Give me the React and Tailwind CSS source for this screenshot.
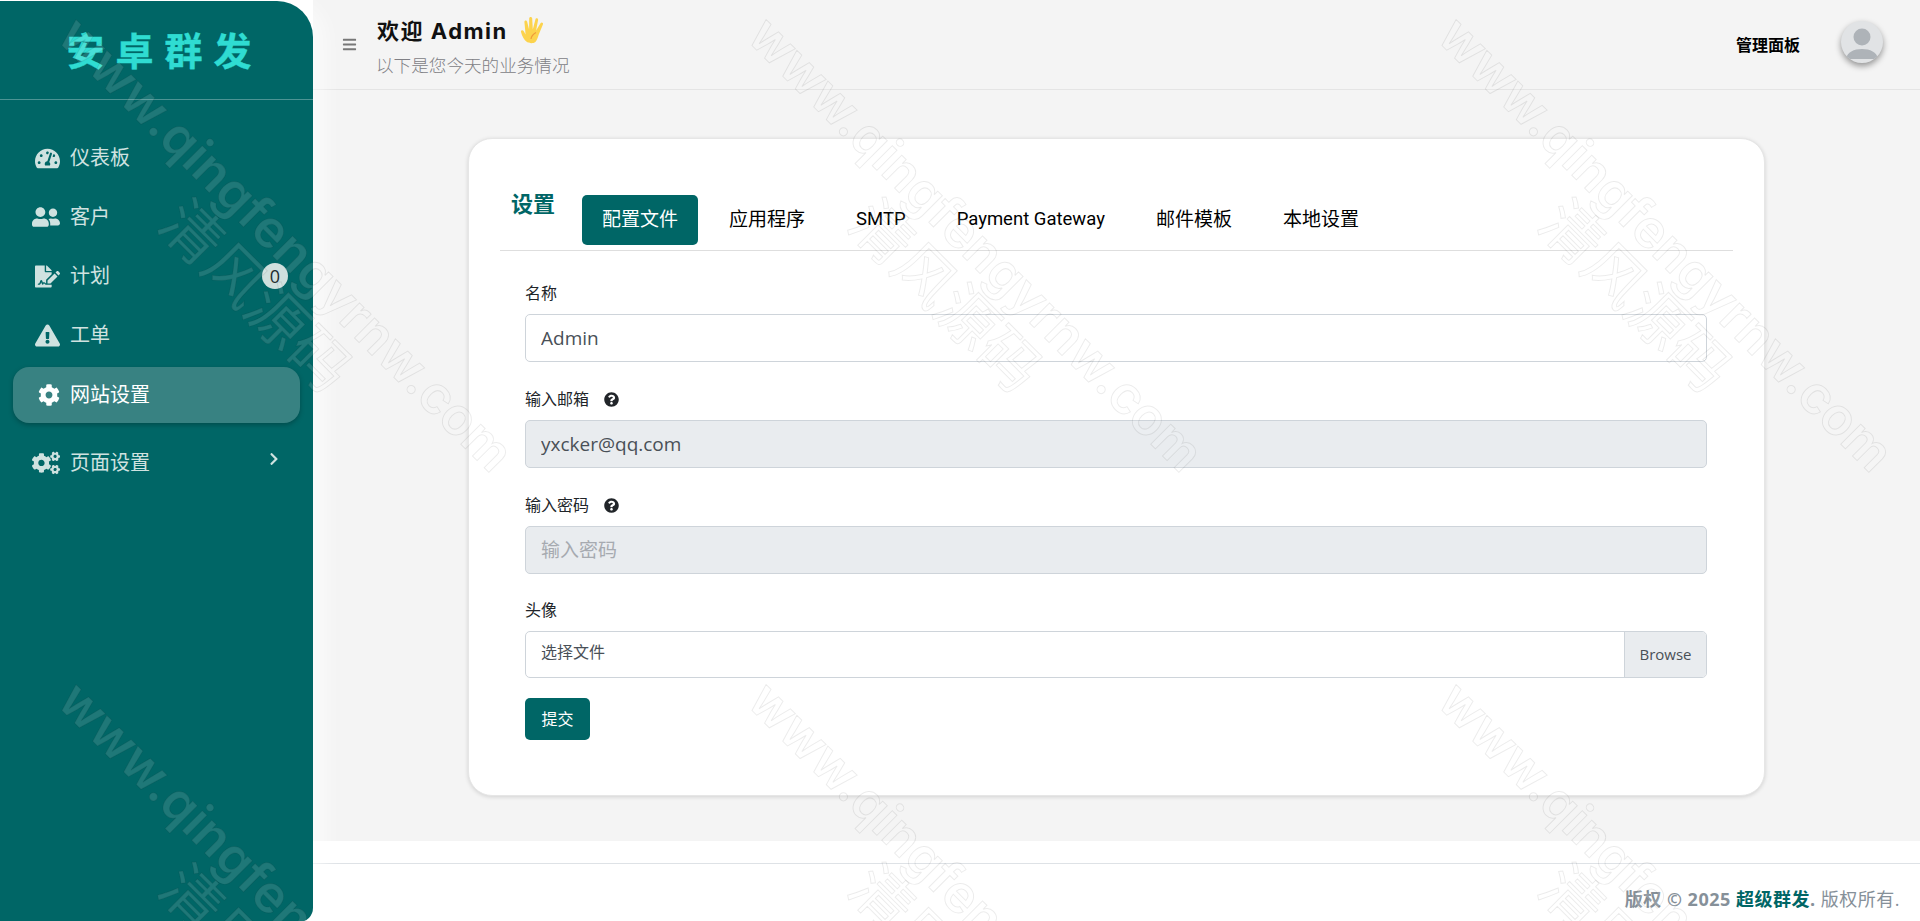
import { FaTachometerAlt, FaUserFriends, FaFileSignature, FaExclamationTriangle, FaCog, FaCogs, FaChevronRight, FaQuestionCircle, FaBars } from 'react-icons/fa'

const CJK = 'font-["Open_Sans","Noto_Sans_CJK_SC",sans-serif]'

const navItems = [
  { label: '仪表板', icon: FaTachometerAlt, size: 25, cls: 'mt-0' },
  { label: '客户', icon: FaUserFriends, size: 28, cls: 'mt-[3px]' },
  { label: '计划', icon: FaFileSignature, size: 25, cls: 'mt-[3px]', badge: '0' },
  { label: '工单', icon: FaExclamationTriangle, size: 25, cls: 'mt-[3px]' },
  { label: '网站设置', icon: FaCog, size: 22, cls: 'mt-[4px]', active: true },
  { label: '页面设置', icon: FaCogs, size: 28, cls: 'mt-[12px]', arrow: true },
]

const tabs = ['配置文件', '应用程序', 'SMTP', 'Payment Gateway', '邮件模板', '本地设置']

function Sidebar() {
  return (
    <aside className="w-[313px] shrink-0 h-full mt-px bg-[#006666] rounded-tr-[36px] rounded-br-[14px] shadow-[12px_0_20px_rgba(255,255,255,0.6)] z-10">
      <div className="h-[98px] border-b border-white/30 box-content flex items-center justify-center">
        <span className="text-[38px] font-bold tracking-[11px] pl-[16px] text-[#2fdcd2] leading-none [-webkit-text-stroke:0.4px_#2fdcd2]">安卓群发</span>
      </div>
      <nav className="pt-[30px] px-[13px] flex flex-col">
        {navItems.map((it) => {
          const Icon = it.icon
          return (
            <a key={it.label} className={`${it.cls} h-[56px] flex items-center pl-[19px] pr-[12px] rounded-[16px] text-[20px] ${it.active ? 'bg-[#388282] text-white shadow-[0_2px_5px_rgba(0,0,0,0.25)]' : 'text-[#cfe2e0]'}`}>
              <span className="w-[28px] flex justify-end"><Icon size={it.size} /></span>
              <span className="ml-[10px] flex-1">{it.label}</span>
              {it.badge && <span className="w-[26px] h-[26px] rounded-full bg-[#cfe0de] text-[#1f2d2d] text-[18px] flex items-center justify-center">{it.badge}</span>}
              {it.arrow && <FaChevronRight className="text-[14px] mr-[7px] -mt-[8px]" />}
            </a>
          )
        })}
      </nav>
    </aside>
  )
}

function Header() {
  return (
    <header className="h-[89px] shrink-0 border-t border-b border-[#e4e4e4] bg-[#f4f4f4] box-content -mt-px flex items-center pl-[29px] pr-[37px]">
      <FaBars className="text-[15px] text-[#777]" />
      <div className="ml-[19px] pt-[2px]">
        <div className="flex items-center h-[28px]">
          <h1 className="pl-[1px] text-[22px] font-bold text-[#111] leading-none tracking-[1.5px] font-['Inter','Noto_Sans_CJK_SC',sans-serif]">欢迎 Admin</h1>
          <svg className="ml-[12px] -mt-[2px]" width="26" height="28" viewBox="0 0 26 28">
            <path d="M7 26c-3-2-5-6-6-10-.4-1.600 1.600-2.400 2.600-1l2 3.600L4.400 6c-.2-1.800 2.200-2.200 2.700-.4l2 8L9.200 2.400c0-2 2.800-2 3 0l.6 11L15.400 3.400c.5-1.800 3-1.200 2.700.6l-2 10.600 4.400-7.400c1-1.600 3.200-.4 2.400 1.300L18.600 19c-.8 2.600-1.600 5-3.200 7-2 1.600-6 1.600-8.400 0z" fill="#fcd34d" />
            <path d="M11 23c.4-3 2.200-5 5-6.500" stroke="#ef9b3a" strokeWidth="1.200" fill="none" />
          </svg>
        </div>
        <p className="text-[17.6px] leading-[20px] mt-[10px] font-light text-[#808085]">以下是您今天的业务情况</p>
      </div>
      <div className="ml-auto flex items-center">
        <span className="text-[16px] font-bold text-black">管理面板</span>
        <div className="ml-[41px] -mt-[6px] w-[42px] h-[42px] rounded-full bg-[#e1e3e5] overflow-hidden shadow-[0_3px_6px_rgba(0,0,0,0.4)]">
          <svg viewBox="0 0 42 42" width="42" height="42">
            <circle cx="21" cy="16" r="8.500" fill="#aeb3b8" />
            <path d="M5 38c1-7 8-10 16-10s15 3 16 10z" fill="#aeb3b8" />
          </svg>
        </div>
      </div>
    </header>
  )
}

function Label({ text, help }) {
  return (
    <div className="h-[24px] mb-[9px] flex items-center text-[16px] text-[#212529]">
      {text}
      {help && <FaQuestionCircle className="ml-[15px] text-[15px]" />}
    </div>
  )
}

function Field({ label, help, value, disabled, placeholder }) {
  return (
    <div className="mb-[25px]">
      <Label text={label} help={help} />
      <input
        readOnly
        disabled={disabled}
        value={value || ''}
        placeholder={placeholder}
        className={`block w-full h-[48px] px-[15px] border border-[#ced4da] rounded-[5px] text-[19px] text-[#495057] placeholder:text-[#a6aab0] outline-none ${disabled ? 'bg-[#e9ecef]' : 'bg-white'}`}
      />
    </div>
  )
}

function SettingsCard() {
  return (
    <section className="bg-white rounded-[24px] border border-[#e6e6e6] shadow-[0_1px_4px_rgba(0,0,0,0.14)] pt-[56px] pb-[55px] px-[31px]">
      <div className="flex items-start border-b border-[#dedede] pb-[5px] pl-[11px]">
        <h2 className="text-[22px] font-bold text-[#006666] leading-[16px] mr-[27px]">设置</h2>
        <div className="flex gap-[11px] font-['Roboto','Noto_Sans_CJK_SC',sans-serif]">
          {tabs.map((t, i) => (
            <button key={t} className={`h-[50px] px-[20px] rounded-[5px] ${t === 'SMTP' || t === 'Payment Gateway' ? 'text-[18.5px]' : 'text-[19px]'} ${i === 0 ? 'bg-[#006666] text-white' : 'text-black'}`}>{t}</button>
          ))}
        </div>
      </div>
      <form className="pt-[30px] pl-[25px] pr-[26px]">
        <Field label="名称" value="Admin" />
        <Field label="输入邮箱" help value="yxcker@qq.com" disabled />
        <Field label="输入密码" help placeholder="输入密码" disabled />
        <div className="-mt-[1px] mb-[20px]">
          <Label text="头像" />
          <div className="flex h-[47px] border border-[#ced4da] rounded-[5px] overflow-hidden text-[#495057]">
            <span className="flex-1 flex items-center pl-[15px] text-[16px] pb-[5px]">选择文件</span>
            <span className="w-[82px] flex items-center justify-center bg-[#e9ecef] border-l border-[#ced4da] text-[15px]">Browse</span>
          </div>
        </div>
        <button type="button" className="block w-[65px] h-[42px] rounded-[5px] bg-[#006666] text-white text-[16px]">提交</button>
      </form>
    </section>
  )
}

function Footer() {
  return (
    <footer className="h-[80px] shrink-0 bg-white pt-[22px]">
      <div className="border-t border-[#dee2e6] h-full flex items-center justify-end pr-[20px] pt-[14px] text-[18px] tracking-[0.5px] text-[#869099]">
        <b>版权 © 2025&nbsp;</b><b className="text-[#006666]">超级群发</b><b>.</b>&nbsp;版权所有.
      </div>
    </footer>
  )
}

function Watermark() {
  const tiles = Array.from({ length: 9 })
  return (
    <div className="absolute inset-0 overflow-hidden pointer-events-none z-20 grid grid-cols-[repeat(3,690px)] auto-rows-[665px]">
      {tiles.map((_, i) => (
        <div key={i} className="relative text-[rgba(255,255,255,0.12)] [-webkit-text-stroke:1px_rgba(0,0,0,0.08)]">
          <span className="absolute left-[286px] top-[244px] -translate-x-1/2 -translate-y-1/2 rotate-45 whitespace-nowrap text-[52px] font-semibold font-['Inter',sans-serif]">www.qingfengyrnw.com</span>
          <span className="absolute left-[259px] top-[293px] -translate-x-1/2 -translate-y-1/2 rotate-45 whitespace-nowrap text-[60px] font-['Noto_Sans_CJK_SC',sans-serif]">清风源码</span>
        </div>
      ))}
    </div>
  )
}

export default function App() {
  return (
    <div className={`relative h-[921px] w-[1920px] flex overflow-hidden bg-white ${CJK}`}>
      <Sidebar />
      <div className="flex-1 flex flex-col min-w-0">
        <Header />
        <main className="flex-1 bg-[#f4f4f4] pl-[155px] pr-[155px] pt-[48px]">
          <SettingsCard />
        </main>
        <Footer />
      </div>
      <Watermark />
    </div>
  )
}
